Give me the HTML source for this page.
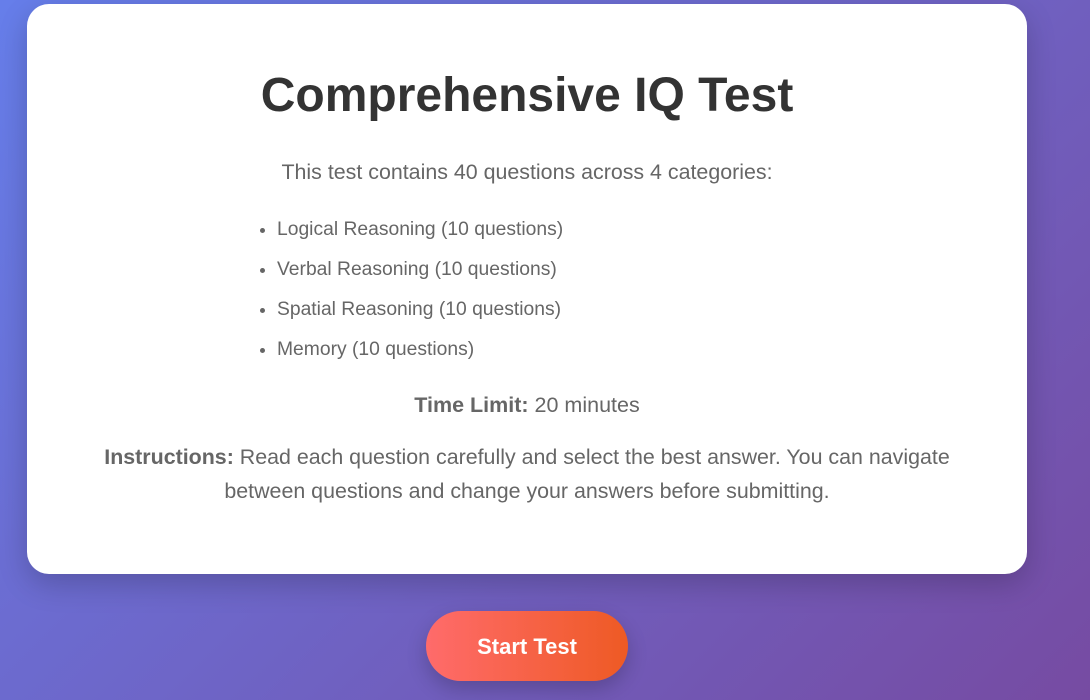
<!DOCTYPE html>
<html><head><meta charset="utf-8"><style>
html,body{margin:0;padding:0;width:1090px;height:700px;overflow:hidden}
body{background:linear-gradient(135deg,#667eea 0%,#764ba2 100%);font-family:"Liberation Sans",sans-serif;position:relative}
.card{position:absolute;left:27px;top:4px;width:1000px;height:570px;background:#fff;border-radius:22px;box-shadow:0 10px 30px rgba(0,0,0,.2)}
.t{position:absolute;left:0;width:1000px;text-align:center;color:#666;white-space:nowrap}
h1{position:absolute;left:0;width:1000px;top:64px;margin:0;text-align:center;font-size:48px;color:#333;font-weight:bold;line-height:56px}
ul{position:absolute;left:230px;top:212px;margin:0;padding:0 0 0 20px;color:#666;font-size:19.3px}
li{height:40px;line-height:28px}
.btn{position:absolute;left:426px;top:611px;width:202px;height:70px;border-radius:35px;background:linear-gradient(90deg,#ff6b6b,#ee5a24);color:#fff;font-weight:bold;font-size:22px;text-align:center;line-height:72px;box-shadow:0 8px 20px rgba(0,0,0,.2)}
</style></head><body>
<div class="card">
<h1>Comprehensive IQ Test</h1>
<div class="t" style="top:156px;font-size:21.4px;line-height:24px">This test contains 40 questions across 4 categories:</div>
<ul><li>Logical Reasoning (10 questions)</li><li>Verbal Reasoning (10 questions)</li><li>Spatial Reasoning (10 questions)</li><li>Memory (10 questions)</li></ul>
<div class="t" style="top:389px;font-size:21.5px;line-height:24px"><b>Time Limit:</b> 20 minutes</div>
<div class="t" style="top:436px;font-size:21.4px;line-height:34px"><b>Instructions:</b> Read each question carefully and select the best answer. You can navigate<br>between questions and change your answers before submitting.</div>
</div>
<div class="btn">Start Test</div>
</body></html>
